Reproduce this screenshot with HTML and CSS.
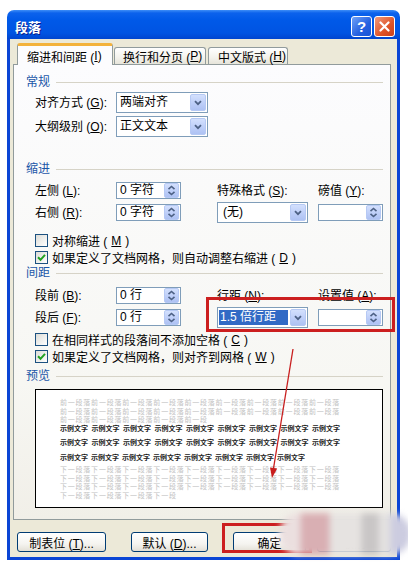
FILE: index.html
```html
<!DOCTYPE html>
<html lang="zh">

<head>
  <meta charset="UTF-8">
  <meta name="viewport" content="width=device-width, initial-scale=1.0">
  <title>段落</title>
  <link rel="stylesheet" href="styles.css">
</head>

<body>
  <div class="window">
    <div class="titlebar">
      <span class="title">段落</span>
      <div class="caption-buttons">
        <span class="caption help">?</span>
        <span class="caption close">
          <svg width="11" height="11" viewBox="0 0 11 11"><path d="M1.5 1.5 L9.5 9.5 M9.5 1.5 L1.5 9.5" stroke="#fff" stroke-width="2.2" stroke-linecap="round"/></svg>
        </span>
      </div>
    </div>

    <div class="client">
      <div class="tabs">
        <div class="tab active">缩进和间距 (<u>I</u>)</div>
        <div class="tab tab-2">换行和分页 (<u>P</u>)</div>
        <div class="tab tab-3">中文版式 (<u>H</u>)</div>
      </div>

      <div class="panel">
        <div class="group-title">常规</div>
        <div class="grid general">
          <span class="label">对齐方式 (<u>G</u>):</span>
          <div class="select w92">
            <span class="value">两端对齐</span>
            <span class="drop"><svg width="8" height="6" viewBox="0 0 8 6"><path d="M1 1.2 L4 4.2 L7 1.2" fill="none" stroke="#4D6185" stroke-width="1.8"/></svg></span>
          </div>
          <span class="label">大纲级别 (<u>O</u>):</span>
          <div class="select w92">
            <span class="value">正文文本</span>
            <span class="drop"><svg width="8" height="6" viewBox="0 0 8 6"><path d="M1 1.2 L4 4.2 L7 1.2" fill="none" stroke="#4D6185" stroke-width="1.8"/></svg></span>
          </div>
        </div>

        <div class="group-title gap-indent">缩进</div>
        <div class="grid pairs">
          <span class="label">左侧 (<u>L</u>):</span>
          <div class="spin">
            <span class="value">0 字符</span>
            <span class="spin-btn"><svg width="9" height="11" viewBox="0 0 9 11"><path d="M1.5 4.2 L4.5 1.5 L7.5 4.2 M1.5 6.8 L4.5 9.5 L7.5 6.8" fill="none" stroke="#4D6185" stroke-width="1.6"/></svg></span>
          </div>
          <span class="label">特殊格式 (<u>S</u>):</span>
          <span class="label">磅值 (<u>Y</u>):</span>

          <span class="label">右侧 (<u>R</u>):</span>
          <div class="spin">
            <span class="value">0 字符</span>
            <span class="spin-btn"><svg width="9" height="11" viewBox="0 0 9 11"><path d="M1.5 4.2 L4.5 1.5 L7.5 4.2 M1.5 6.8 L4.5 9.5 L7.5 6.8" fill="none" stroke="#4D6185" stroke-width="1.6"/></svg></span>
          </div>
          <div class="select w91">
            <span class="value pad5">(无)</span>
            <span class="drop"><svg width="8" height="6" viewBox="0 0 8 6"><path d="M1 1.2 L4 4.2 L7 1.2" fill="none" stroke="#4D6185" stroke-width="1.8"/></svg></span>
          </div>
          <div class="spin">
            <span class="value"></span>
            <span class="spin-btn"><svg width="9" height="11" viewBox="0 0 9 11"><path d="M1.5 4.2 L4.5 1.5 L7.5 4.2 M1.5 6.8 L4.5 9.5 L7.5 6.8" fill="none" stroke="#4D6185" stroke-width="1.6"/></svg></span>
          </div>
        </div>

        <div class="checks gap-after-indent">
          <div class="check"><span class="box"></span>对称缩进 (<u>M</u>)</div>
          <div class="check"><span class="box"><svg width="9" height="9" viewBox="0 0 9 9"><path d="M1 4.3 L3.5 6.8 L8 1.8" fill="none" stroke="#21A121" stroke-width="2"/></svg></span>如果定义了文档网格，则自动调整右缩进 (<u>D</u>)</div>
        </div>

        <div class="group-title">间距</div>
        <div class="grid pairs gap-spacing">
          <span class="label">段前 (<u>B</u>):</span>
          <div class="spin">
            <span class="value">0 行</span>
            <span class="spin-btn"><svg width="9" height="11" viewBox="0 0 9 11"><path d="M1.5 4.2 L4.5 1.5 L7.5 4.2 M1.5 6.8 L4.5 9.5 L7.5 6.8" fill="none" stroke="#4D6185" stroke-width="1.6"/></svg></span>
          </div>
          <span class="label">行距 (<u>N</u>):</span>
          <span class="label">设置值 (<u>A</u>):</span>

          <span class="label">段后 (<u>F</u>):</span>
          <div class="spin">
            <span class="value">0 行</span>
            <span class="spin-btn"><svg width="9" height="11" viewBox="0 0 9 11"><path d="M1.5 4.2 L4.5 1.5 L7.5 4.2 M1.5 6.8 L4.5 9.5 L7.5 6.8" fill="none" stroke="#4D6185" stroke-width="1.6"/></svg></span>
          </div>
          <div class="select w91">
            <span class="value selected">1.5 倍行距</span>
            <span class="drop"><svg width="8" height="6" viewBox="0 0 8 6"><path d="M1 1.2 L4 4.2 L7 1.2" fill="none" stroke="#4D6185" stroke-width="1.8"/></svg></span>
          </div>
          <div class="spin">
            <span class="value"></span>
            <span class="spin-btn"><svg width="9" height="11" viewBox="0 0 9 11"><path d="M1.5 4.2 L4.5 1.5 L7.5 4.2 M1.5 6.8 L4.5 9.5 L7.5 6.8" fill="none" stroke="#4D6185" stroke-width="1.6"/></svg></span>
          </div>
        </div>

        <div class="checks gap-after-spacing">
          <div class="check"><span class="box"></span>在相同样式的段落间不添加空格 (<u>C</u>)</div>
          <div class="check"><span class="box"><svg width="9" height="9" viewBox="0 0 9 9"><path d="M1 4.3 L3.5 6.8 L8 1.8" fill="none" stroke="#21A121" stroke-width="2"/></svg></span>如果定义了文档网格，则对齐到网格 (<u>W</u>)</div>
        </div>

        <div class="group-title gap-preview">预览</div>
        <div class="preview">
          <div class="faint">前一段落前一段落前一段落前一段落前一段落前一段落前一段落前一段落前一段落</div>
          <div class="faint">前一段落前一段落前一段落前一段落前一段落前一段落前一段落前一段落前一段落</div>
          <div class="faint">前一段落前一段落前一段落前一段落前一段</div>
          <div class="sample">
            <div class="sample-line"><span>示例文字</span><span>示例文字</span><span>示例文字</span><span>示例文字</span><span>示例文字</span><span>示例文字</span><span>示例文字</span><span>示例文字</span><span>示例文字</span></div>
            <div class="sample-line"><span>示例文字</span><span>示例文字</span><span>示例文字</span><span>示例文字</span><span>示例文字</span><span>示例文字</span><span>示例文字</span><span>示例文字</span><span>示例文字</span></div>
            <div class="sample-line last"><span>示例文字</span><span>示例文字</span><span>示例文字</span><span>示例文字</span><span>示例文字</span><span>示例文字</span><span>示例文字</span><span>示例文字</span></div>
          </div>
          <div class="faint after">下一段落下一段落下一段落下一段落下一段落下一段落下一段落下一段落下一段落</div>
          <div class="faint">下一段落下一段落下一段落下一段落下一段落下一段落下一段落下一段落下一段落</div>
          <div class="faint">下一段落下一段落下一段落下一段落下一段落下一段落下一段落下一段落下一段落</div>
          <div class="faint">下一段落下一段落下一段落下一段</div>
        </div>
      </div>

      <div class="buttons">
        <button class="btn b-tabs">制表位 (<u>T</u>)...</button>
        <button class="btn b-default">默认 (<u>D</u>)...</button>
        <button class="btn b-ok">确定</button>
        <button class="btn b-cancel">取消</button>
      </div>
    </div>
  </div>

  <!-- annotations drawn on top of the screenshot -->
  <div class="mark mark-spacing"></div>
  <div class="mark mark-ok"></div>
  <svg class="arrow" width="408" height="571" viewBox="0 0 408 571">
    <line x1="293" y1="349" x2="273.4" y2="469" stroke="#C81E1E" stroke-width="1.3"/>
    <polygon points="272,478 277.2,468.6 270,467.4" fill="#C81E1E"/>
  </svg>
  <div class="smudge"></div>
</body>

</html>
```

FILE: styles.css
```css
* {
  box-sizing: border-box;
}

body {
  margin: 0;
  height: 571px;
  overflow: hidden;
  position: relative;
  background: #fff;
  font-family: "Liberation Sans", "Noto Sans CJK SC", sans-serif;
  font-size: 12px;
  color: #000;
}

u {
  text-decoration: underline;
}

.window {
  width: 393px;
  margin: 10px 0 0 7px;
}

.titlebar {
  height: 29px;
  border-radius: 7px 7px 0 0;
  background: linear-gradient(#3E8EF7 0, #0C62EC 3px, #0059E8 35%, #0054E2 80%, #0045CF 100%);
  display: flex;
  align-items: center;
  justify-content: space-between;
  padding: 3px 5px 0 8px;
}

.title {
  color: #fff;
  font-family: "Noto Sans CJK SC", sans-serif;
  font-weight: bold;
  font-size: 13px;
  text-shadow: 1px 1px 0 #0A1E8C;
}

.caption-buttons {
  display: flex;
  gap: 2px;
}

.caption {
  width: 21px;
  height: 21px;
  border: 1px solid #fff;
  border-radius: 3px;
  display: flex;
  align-items: center;
  justify-content: center;
}

.help {
  background: linear-gradient(135deg, #6FA2F8, #2460E0 60%, #1B54D6);
  color: #fff;
  font-weight: bold;
  font-size: 15px;
  line-height: 1;
}

.close {
  background: linear-gradient(135deg, #F09A7C, #DF5428 60%, #C9401A);
}

.client {
  height: 521px;
  background: #ECE9D8;
  border: 3px solid #0A45D5;
  border-top: 0;
  padding: 4px 6px 0 3px;
}

.tabs {
  position: relative;
  z-index: 2;
  height: 21px;
  margin-left: 4px;
  display: flex;
  align-items: flex-end;
}

.tab {
  height: 17px;
  border: 1px solid #919B9C;
  border-bottom: 0;
  border-radius: 3px 3px 0 0;
  background: linear-gradient(#FFFFFF, #F3F2EC 60%, #E6E4DA);
  display: flex;
  align-items: center;
  padding-left: 8px;
  white-space: nowrap;
}

.tab.active {
  align-self: flex-start;
  height: 22px;
  width: 96px;
  padding-left: 9px;
  padding-top: 1px;
  border-top: 3px solid #F3B23C;
  background: #FCFCFE;
}

.tab-2 {
  width: 92px;
  margin-left: 1px;
}

.tab-3 {
  width: 80px;
  margin-left: 2px;
  padding-left: 9px;
}

.panel {
  height: 456px;
  border: 1px solid #919B9C;
  background: linear-gradient(#FCFCFE, #F7F7F3 70%, #F1EFE8);
  padding: 10px 7px 0 12px;
}

.group-title {
  display: flex;
  align-items: center;
  height: 14px;
  line-height: 14px;
  color: #1A56A8;
}

.group-title::after {
  content: "";
  flex: 1;
  height: 1px;
  margin-left: 6px;
  background: #D6D3C7;
}

.gap-indent {
  margin-top: 25px;
}

.gap-preview {
  margin-top: 4px;
}

.grid {
  display: grid;
  grid-template-columns: 81px 101px 101px 65px;
  padding-left: 9px;
  align-items: center;
}

.general {
  margin-top: 3px;
  grid-template-columns: 81px 92px;
  grid-template-rows: 21px 21px;
  row-gap: 3px;
}

.pairs {
  margin-top: 6px;
  grid-template-rows: 17px 21px;
  row-gap: 3px;
}

.gap-spacing {
  margin-top: 7px;
}

.label {
  white-space: nowrap;
  line-height: 14px;
}

.select {
  height: 21px;
  border: 1px solid #7F9DB9;
  background: #fff;
  display: flex;
  align-items: center;
  padding: 1px;
}

.select.w92 {
  width: 92px;
}

.select.w91 {
  width: 91px;
}

.value {
  flex: 1;
  padding-left: 2px;
  white-space: nowrap;
  line-height: 15px;
}

.value.pad5 {
  padding-left: 4px;
}

.value.selected {
  background: #316AC5;
  color: #fff;
  margin-right: 2px;
  padding-left: 1px;
}

.drop {
  width: 16px;
  height: 17px;
  border: 1px solid #B6C9F4;
  border-radius: 2px;
  background: linear-gradient(#D3E0FD, #BCCDF8 60%, #AEC2F3);
  display: flex;
  align-items: center;
  justify-content: center;
}

.spin {
  width: 65px;
  height: 17px;
  border: 1px solid #7F9DB9;
  background: #fff;
  display: flex;
  align-items: center;
  padding: 0 1px;
}

.spin-btn {
  width: 15px;
  height: 15px;
  border: 1px solid #B6C9F4;
  border-radius: 2px;
  background: linear-gradient(#D3E0FD, #BCCDF8 60%, #AEC2F3);
  display: flex;
  align-items: center;
  justify-content: center;
}

.checks {
  padding-left: 9px;
}

.gap-after-indent {
  margin-top: 9px;
}

.gap-after-spacing {
  margin-top: 3px;
}

.check {
  height: 17px;
  display: flex;
  align-items: center;
  gap: 4px;
  white-space: nowrap;
}

.box {
  width: 13px;
  height: 13px;
  border: 1px solid #1C5180;
  background: linear-gradient(135deg, #DCDCD7, #FFFFFF);
  display: flex;
  align-items: center;
  justify-content: center;
}

.preview {
  margin: 6px 0 0 9px;
  width: 348px;
  height: 119px;
  border: 1px solid #000;
  background: #fff;
  padding: 8px 0 0 24px;
  font-family: "Noto Sans CJK SC", sans-serif;
  font-size: 7px;
}

.faint {
  color: #C2C2C2;
  letter-spacing: 0.78px;
  line-height: 8.5px;
  white-space: nowrap;
}

.faint.after {
  margin-top: 1px;
}

.sample {
  margin-top: -3px;
}

.sample-line {
  width: 280px;
  display: flex;
  justify-content: space-between;
  line-height: 14.5px;
  color: #1A1A1A;
  font-weight: bold;
}

.sample-line.last {
  justify-content: flex-start;
  gap: 3px;
}

.buttons {
  display: flex;
  margin: 12px 0 0 4px;
}

.btn {
  height: 20px;
  padding: 0;
  border: 1px solid #003C74;
  border-radius: 3px;
  background: linear-gradient(#FFFFFF, #F5F4F0 60%, #E3E0D6);
  font-family: "Liberation Sans", "Noto Sans CJK SC", sans-serif;
  font-size: 12px;
  color: #000;
}

.b-tabs {
  width: 89px;
}

.b-default {
  width: 77px;
  margin-left: 25px;
}

.b-ok {
  width: 73px;
  margin-left: 25px;
}

.b-cancel {
  width: 74px;
  margin-left: 11px;
}

.mark {
  position: absolute;
  border: 3px solid #CC1F1F;
}

.mark-spacing {
  left: 206px;
  top: 297px;
  width: 189px;
  height: 35px;
}

.mark-ok {
  left: 222px;
  top: 523px;
  width: 90px;
  height: 30px;
}

.arrow {
  position: absolute;
  left: 0;
  top: 0;
  pointer-events: none;
}

.smudge {
  position: absolute;
  left: 279px;
  top: 513px;
  width: 132px;
  height: 42px;
  border-radius: 21px;
  background: linear-gradient(90deg, #EBDFDF 0, #EBDFDF 16%, #D9AFB3 17%, #D9AFB3 50px, #E6E3E1 51px, #E6E3E1 62%, #C9C6C6 63%, #C9C6C6 75%, #E3E1E0 76%, #E3E1E0 84%, #CCCCE0 85%);
  filter: blur(3px);
}
```
